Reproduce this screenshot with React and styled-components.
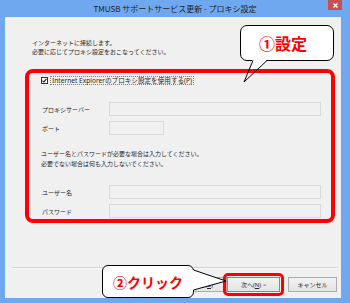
import React from "react";
import styled, { createGlobalStyle } from "styled-components";

const Global = createGlobalStyle`
  html, body { margin: 0; padding: 0; background: #6fa8ef; }
  body { font-family: "Noto Sans", "Noto Sans CJK JP", sans-serif; }
`;

const FONT = `"Noto Sans", "Noto Sans CJK JP", sans-serif`;

const Window = styled.div`
  position: relative;
  width: 350px;
  height: 303px;
  background: #6fa8ef;
  display: flex;
  flex-direction: column;
  overflow: hidden;
  font-family: ${FONT};
  color: #262626;
`;

const TitleBar = styled.div`
  position: relative;
  height: 17px;
  flex: none;
  display: flex;
  align-items: center;
  justify-content: center;
  font-size: 8px;
  color: #1e1e1e;
  font-family: "Noto Sans CJK JP", sans-serif;
`;

const CloseBtn = styled.div`
  position: absolute;
  right: 8px;
  top: 0;
  width: 14px;
  height: 10px;
  background: #c75050;
  display: flex;
  align-items: center;
  justify-content: center;
`;

const Client = styled.div`
  flex: 1;
  margin: 0 9px 5px 5px;
  background: #f0f0f0;
  display: flex;
  flex-direction: column;
  font-size: 6px;
`;

const Intro = styled.div`
  padding: 22px 0 0 27px;
  line-height: 9px;
`;

const RedFrame = styled.div`
  margin: 12px 6px 0 20px;
  border: 4px solid #ff0000;
  border-radius: 8px;
  padding: 3px 10px 1px 12px;
  display: flex;
  flex-direction: column;
`;

const CheckRow = styled.div`
  display: flex;
  align-items: center;
  height: 8px;
  gap: 2px;
`;

const CheckBox = styled.span`
  width: 7px;
  height: 7px;
  box-sizing: border-box;
  border: 1px solid #333;
  background: #fff;
  display: flex;
  align-items: center;
  justify-content: center;
`;

const FocusLabel = styled.span`
  border: 1px dotted #7a7a7a;
  padding: 0 1px;
  line-height: 7px;
  font-size: 6.6px;
  white-space: nowrap;
`;

const FieldRow = styled.div`
  display: flex;
  align-items: center;
  margin-top: ${(p) => p.$mt}px;
`;

const FieldLabel = styled.span`
  width: 68px;
  padding-left: 1px;
  box-sizing: border-box;
  flex: none;
`;

const Input = styled.div`
  width: ${(p) => p.$w}px;
  height: 14px;
  box-sizing: border-box;
  border: 1px solid #dadada;
  background: #f0f0f0;
`;

const Notes = styled.div`
  margin-top: 14px;
  line-height: 10px;
`;

const Spacer = styled.div`
  flex: 1;
`;

const Separator = styled.div`
  height: 1px;
  background: #d2d2d2;
  border-bottom: 1px solid #fbfbfb;
  margin: 0 4px 8px 7px;
`;

const Footer = styled.div`
  display: flex;
  justify-content: flex-end;
  align-items: center;
  padding: 0 4px 6px 0;
`;

const Button = styled.div`
  width: ${(p) => p.$w}px;
  height: 15px;
  box-sizing: border-box;
  border: 1px solid ${(p) => (p.$default ? "#4a98e0" : "#acacac")};
  background: linear-gradient(#f2f2f2, #e4e4e4);
  display: flex;
  align-items: center;
  justify-content: center;
  font-size: 6px;
  margin-left: ${(p) => p.$ml || 0}px;
  white-space: nowrap;
  u { text-decoration: underline; }
`;

const Highlight = styled.div`
  border: 3px solid #ff0000;
  border-radius: 5px;
  padding: 1px;
  margin: -4px;
  display: flex;
`;

const Bubble = styled.div`
  position: absolute;
  left: ${(p) => p.$x}px;
  top: ${(p) => p.$y}px;
  width: ${(p) => p.$w}px;
  height: ${(p) => p.$h}px;
  box-sizing: border-box;
  border: 1px solid #000;
  border-radius: ${(p) => p.$r}px;
  background: #fff;
  color: #ff0000;
  font-family: "Noto Sans CJK JP", sans-serif;
  font-weight: 700;
  font-size: ${(p) => p.$fs}px;
  display: flex;
  align-items: center;
  justify-content: center;
  padding-right: ${(p) => p.$pr || 0}px;
`;

const Tail = styled.svg`
  position: absolute;
  left: ${(p) => p.$x}px;
  top: ${(p) => p.$y}px;
  overflow: visible;
`;

export default function App() {
  return (
    <>
      <Global />
      <Window>
        <TitleBar>
          TMUSB サポートサービス更新 - プロキシ設定
          <CloseBtn>
            <svg width="5" height="5" viewBox="0 0 5 5">
              <path d="M0.5 0.5 L4.5 4.5 M4.5 0.5 L0.5 4.5" stroke="#fff" strokeWidth="1.3" />
            </svg>
          </CloseBtn>
        </TitleBar>
        <Client>
          <Intro>
            インターネットに接続します。
            <br />
            必要に応じてプロキシ設定をおこなってください。
          </Intro>
          <RedFrame>
            <CheckRow>
              <CheckBox>
                <svg width="5" height="5" viewBox="0 0 5 5">
                  <path d="M0.6 2.6 L1.9 4 L4.4 0.8" stroke="#111" strokeWidth="1.1" fill="none" />
                </svg>
              </CheckBox>
              <FocusLabel>Internet Explorerのプロキシ設定を使用する(P)</FocusLabel>
            </CheckRow>
            <FieldRow $mt={18}>
              <FieldLabel>プロキシサーバー</FieldLabel>
              <Input $w={212} />
            </FieldRow>
            <FieldRow $mt={5}>
              <FieldLabel>ポート</FieldLabel>
              <Input $w={55} />
            </FieldRow>
            <Notes>
              ユーザー名とパスワードが必要な場合は入力してください。
              <br />
              必要でない場合は何も入力しないでください。
            </Notes>
            <FieldRow $mt={16}>
              <FieldLabel>ユーザー名</FieldLabel>
              <Input $w={212} />
            </FieldRow>
            <FieldRow $mt={5}>
              <FieldLabel>パスワード</FieldLabel>
              <Input $w={212} />
            </FieldRow>
          </RedFrame>
          <Spacer />
          <Separator />
          <Footer>
            <Button $w={53}>
              &lt; 戻る(<u>B</u>)
            </Button>
            <Highlight>
              <Button $w={53} $default>
                次へ(<u>N</u>) &gt;
              </Button>
            </Highlight>
            <Button $w={49} $ml={8}>
              キャンセル
            </Button>
          </Footer>
        </Client>

        <Bubble $x={240} $y={25} $w={94} $h={36} $r={7} $fs={16} $pr={8}>
          ①設定
        </Bubble>
        <Tail $x={240} $y={58} width="30" height="26" viewBox="0 0 30 26">
          <polygon points="12.6,1.5 27.4,1.5 18.2,11 9.6,11" fill="#fff" />
          <polyline points="13,2.5 4,24 27,2.5" fill="none" stroke="#000" strokeWidth="1" />
        </Tail>

        <Bubble $x={102} $y={265} $w={92} $h={33} $r={6} $fs={14}>
          ②クリック
        </Bubble>
        <Tail $x={192} $y={266} width="36" height="27" viewBox="0 0 36 27">
          <polygon points="0.5,4 2,4 34,15 2,24 0.5,24" fill="#fff" />
          <polyline points="1.5,4 34,15 1.5,24" fill="none" stroke="#000" strokeWidth="1" />
        </Tail>
      </Window>
    </>
  );
}
